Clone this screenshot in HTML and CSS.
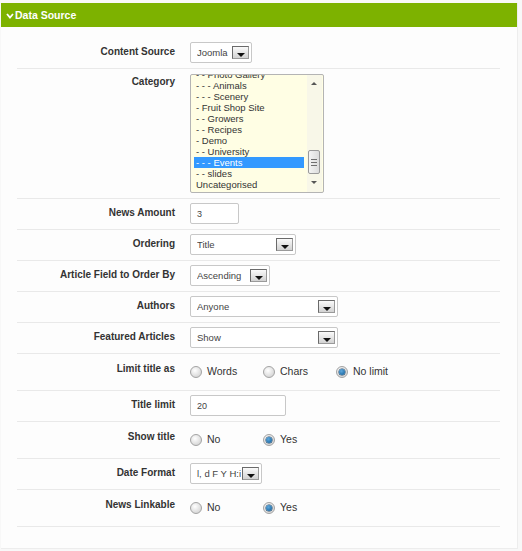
FILE: index.html
```html
<!DOCTYPE html>
<html lang="en">
<head>
  <meta charset="UTF-8">
  <title>Data Source</title>
  <link rel="stylesheet" href="styles.css">
</head>
<body>

  <div class="panel">
    <div class="panel-header">
      <svg class="chevron" width="8" height="6" viewBox="0 0 8 6"><polyline points="1,1 4,4.5 7,1" fill="none" stroke="#fff" stroke-width="1.8"/></svg>
      Data Source
    </div>

    <div class="panel-body">
      <div class="row">
        <label>Content Source</label>
        <div class="field">
          <div class="select" style="width:62px"><span>Joomla</span><i class="drop"></i></div>
        </div>
      </div>

      <div class="row row-list">
        <label>Category</label>
        <div class="field">
          <div class="listbox">
            <ul class="list-items">
              <li>- - Photo Gallery</li>
              <li>- - - Animals</li>
              <li>- - - Scenery</li>
              <li>- Fruit Shop Site</li>
              <li>- - Growers</li>
              <li>- - Recipes</li>
              <li>- Demo</li>
              <li>- - University</li>
              <li class="selected">- - - Events</li>
              <li>- - slides</li>
              <li>Uncategorised</li>
            </ul>
            <div class="scrollbar">
              <i class="arrow-up"></i>
              <div class="thumb"><b></b><b></b><b></b></div>
              <i class="arrow-down"></i>
            </div>
          </div>
        </div>
      </div>

      <div class="row">
        <label>News Amount</label>
        <div class="field"><div class="input" style="width:49px">3</div></div>
      </div>

      <div class="row">
        <label>Ordering</label>
        <div class="field">
          <div class="select" style="width:106px"><span>Title</span><i class="drop"></i></div>
        </div>
      </div>

      <div class="row">
        <label>Article Field to Order By</label>
        <div class="field">
          <div class="select" style="width:80px"><span>Ascending</span><i class="drop"></i></div>
        </div>
      </div>

      <div class="row">
        <label>Authors</label>
        <div class="field">
          <div class="select" style="width:148px"><span>Anyone</span><i class="drop"></i></div>
        </div>
      </div>

      <div class="row">
        <label>Featured Articles</label>
        <div class="field">
          <div class="select" style="width:148px"><span>Show</span><i class="drop"></i></div>
        </div>
      </div>

      <div class="row row-radio">
        <label>Limit title as</label>
        <div class="field radios">
          <span class="radio"><i></i>Words</span>
          <span class="radio"><i></i>Chars</span>
          <span class="radio checked"><i></i>No limit</span>
        </div>
      </div>

      <div class="row">
        <label>Title limit</label>
        <div class="field"><div class="input" style="width:96px">20</div></div>
      </div>

      <div class="row row-radio">
        <label>Show title</label>
        <div class="field radios">
          <span class="radio"><i></i>No</span>
          <span class="radio checked"><i></i>Yes</span>
        </div>
      </div>

      <div class="row">
        <label>Date Format</label>
        <div class="field">
          <div class="select" style="width:72px"><span>l, d F Y H:i</span><i class="drop"></i></div>
        </div>
      </div>

      <div class="row row-radio">
        <label>News Linkable</label>
        <div class="field radios">
          <span class="radio"><i></i>No</span>
          <span class="radio checked"><i></i>Yes</span>
        </div>
      </div>
    </div>
  </div>

</body>
</html>
```

FILE: styles.css
```css
/* Estilos globales */
* {
  margin: 0;
  padding: 0;
  box-sizing: border-box;
}

body {
  background: #f8f8f8;
  font-family: 'Liberation Sans', Arial, sans-serif;
  font-size: 11px;
  color: #333;
}

.panel {
  width: 517px;
  margin: 3px 0 0 1px;
  background: #fdfdfd;
  border-right: 1px solid #ededed;
  border-bottom: 1px solid #ededed;
}

.panel-header {
  height: 24px;
  background: #7db200;
  color: #fff;
  font-weight: bold;
  font-size: 10.5px;
  line-height: 24px;
  padding-left: 5px;
  display: flex;
  align-items: center;
  gap: 1px;
}

.chevron {
  margin-top: 1px;
}

.panel-body {
  padding: 11px 17px 21px 16px;
}

.row {
  display: grid;
  grid-template-columns: 158px 1fr;
  column-gap: 15px;
  padding: 4px 0 5px;
  border-bottom: 1px solid #e9e9e9;
}

.row label {
  text-align: right;
  font-weight: bold;
  font-size: 10px;
  line-height: 19px;
  color: #333;
}

.row-list {
  padding: 5px 0 5px;
}

.row-list label {
  line-height: 16px;
}

.row-radio {
  padding: 4px 0 6px;
}

.row-radio label {
  line-height: 22px;
}

.field {
  display: flex;
  align-items: center;
}

/* Select y input */
.select,
.input {
  height: 21px;
  background: #fff;
  border: 1px solid #c8c8c8;
  border-radius: 2px;
  display: flex;
  align-items: center;
  padding-left: 6px;
  font-size: 9.5px;
  color: #444;
}

.input {
  font-size: 9px;
}

.select span {
  flex: 1;
  white-space: nowrap;
  overflow: hidden;
}

.drop {
  position: relative;
  width: 17px;
  height: 13px;
  margin: 0 2px 0 1px;
  flex: none;
  border: 1px solid #6a6a6a;
  border-right-color: #9a9a9a;
  border-bottom-color: #9a9a9a;
  background: linear-gradient(#fafafa, #d2d2d2);
}

.drop::after {
  content: "";
  position: absolute;
  left: 4px;
  bottom: 1px;
  border-left: 4px solid transparent;
  border-right: 4px solid transparent;
  border-top: 4px solid #111;
}

/* Lista */
.listbox {
  width: 134px;
  height: 119px;
  display: flex;
  background: #fffee4;
  border: 1px solid #b4b4b4;
  border-radius: 2px;
  overflow: hidden;
}

.list-items {
  list-style: none;
  flex: 1;
  margin-top: -6px;
  padding: 0 3px;
}

.list-items li {
  height: 11px;
  line-height: 11px;
  font-size: 9.5px;
  padding-left: 2px;
  white-space: nowrap;
}

.list-items li.selected {
  background: #3399ff;
  color: #fff;
}

.scrollbar {
  width: 15px;
  margin-right: 1px;
  position: relative;
  background: #f8f7e8;
}

.arrow-up,
.arrow-down {
  position: absolute;
  left: 4px;
  border-left: 3px solid transparent;
  border-right: 3px solid transparent;
}

.arrow-up {
  top: 7px;
  border-bottom: 3px solid #555;
}

.arrow-down {
  bottom: 8px;
  border-top: 3px solid #555;
}

.thumb {
  position: absolute;
  left: 1px;
  top: 75px;
  width: 12px;
  height: 24px;
  border: 1px solid #9a9a9a;
  border-radius: 2px;
  background: linear-gradient(90deg, #f4f4f4, #dcdcdc);
  display: flex;
  flex-direction: column;
  align-items: center;
  justify-content: center;
  gap: 2px;
}

.thumb b {
  width: 6px;
  height: 1px;
  background: #6f6f6f;
}

/* Radios */
.radios {
  height: 26px;
}

.radio {
  width: 73px;
  display: flex;
  align-items: center;
  font-size: 10.5px;
  color: #333;
}

.radio i {
  width: 12px;
  height: 12px;
  border-radius: 50%;
  border: 1px solid #a3a3a3;
  background: radial-gradient(circle at 40% 35%, #ffffff, #dadada 70%);
  margin-right: 5px;
  margin-top: 2px;
  position: relative;
}

.radio.checked i::after {
  content: "";
  position: absolute;
  left: 2px;
  top: 2px;
  width: 6px;
  height: 6px;
  border-radius: 50%;
  background: radial-gradient(circle at 40% 35%, #5fa8dc, #0b5a96);
  box-shadow: 0 0 0 0.5px #1b3f5e;
}
```
